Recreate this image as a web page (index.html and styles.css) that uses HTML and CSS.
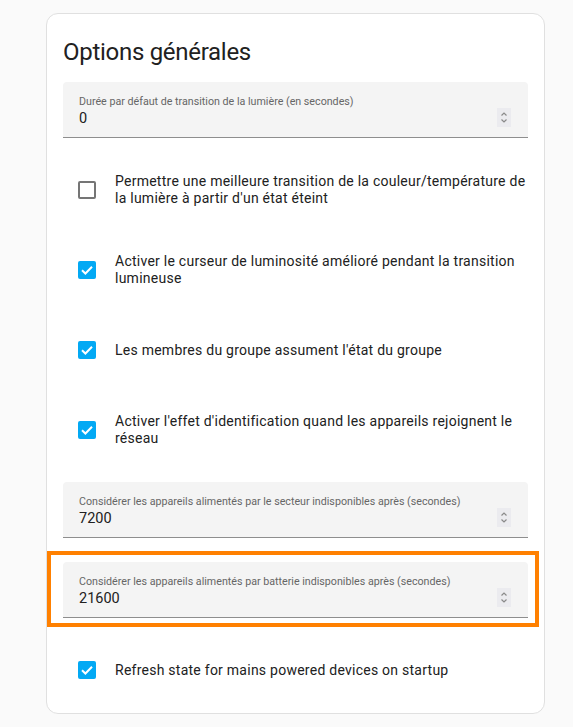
FILE: index.html
```html
<!DOCTYPE html>
<html lang="fr">
<head>
<meta charset="utf-8">
<link rel="stylesheet" href="styles.css">
</head>
<body>
<div class="card">
  <h1 class="title">Options générales</h1>

  <div class="field">
    <div class="field-text">
      <span class="label">Durée par défaut de transition de la lumière (en secondes)</span>
      <span class="value">0</span>
    </div>
    <svg class="spin" width="14" height="19" viewBox="0 0 14 19"><rect width="14" height="19" fill="#ebebef"/><path d="M4.5 7.5 L7 5 L9.5 7.5" fill="none" stroke="#8a8a8a" stroke-width="1.2"/><path d="M4.5 11.5 L7 14 L9.5 11.5" fill="none" stroke="#8a8a8a" stroke-width="1.2"/></svg>
  </div>

  <div class="rows first">
    <div class="row">
      <span class="cb"></span>
      <span class="row-text">Permettre une meilleure transition de la couleur/température de la lumière à partir d'un état éteint</span>
    </div>
    <div class="row">
      <span class="cb on"><svg width="18" height="18" viewBox="0 0 18 18"><path d="M4 9.2 L7.4 12.5 L14 5.8" fill="none" stroke="#fff" stroke-width="2"/></svg></span>
      <span class="row-text">Activer le curseur de luminosité amélioré pendant la transition lumineuse</span>
    </div>
    <div class="row">
      <span class="cb on"><svg width="18" height="18" viewBox="0 0 18 18"><path d="M4 9.2 L7.4 12.5 L14 5.8" fill="none" stroke="#fff" stroke-width="2"/></svg></span>
      <span class="row-text">Les membres du groupe assument l'état du groupe</span>
    </div>
    <div class="row">
      <span class="cb on"><svg width="18" height="18" viewBox="0 0 18 18"><path d="M4 9.2 L7.4 12.5 L14 5.8" fill="none" stroke="#fff" stroke-width="2"/></svg></span>
      <span class="row-text">Activer l'effet d'identification quand les appareils rejoignent le réseau</span>
    </div>
  </div>

  <div class="field gap-top">
    <div class="field-text">
      <span class="label">Considérer les appareils alimentés par le secteur indisponibles après (secondes)</span>
      <span class="value">7200</span>
    </div>
    <svg class="spin" width="14" height="19" viewBox="0 0 14 19"><rect width="14" height="19" fill="#ebebef"/><path d="M4.5 7.5 L7 5 L9.5 7.5" fill="none" stroke="#8a8a8a" stroke-width="1.2"/><path d="M4.5 11.5 L7 14 L9.5 11.5" fill="none" stroke="#8a8a8a" stroke-width="1.2"/></svg>
  </div>

  <div class="field highlighted">
    <div class="field-text">
      <span class="label">Considérer les appareils alimentés par batterie indisponibles après (secondes)</span>
      <span class="value">21600</span>
    </div>
    <svg class="spin" width="14" height="19" viewBox="0 0 14 19"><rect width="14" height="19" fill="#ebebef"/><path d="M4.5 7.5 L7 5 L9.5 7.5" fill="none" stroke="#8a8a8a" stroke-width="1.2"/><path d="M4.5 11.5 L7 14 L9.5 11.5" fill="none" stroke="#8a8a8a" stroke-width="1.2"/></svg>
    <span class="outline"></span>
  </div>

  <div class="rows">
    <div class="row">
      <span class="cb on"><svg width="18" height="18" viewBox="0 0 18 18"><path d="M4 9.2 L7.4 12.5 L14 5.8" fill="none" stroke="#fff" stroke-width="2"/></svg></span>
      <span class="row-text">Refresh state for mains powered devices on startup</span>
    </div>
  </div>
</div>
</body>
</html>
```

FILE: styles.css
```css
* { box-sizing: border-box; }
html, body {
  margin: 0;
  padding: 0;
  background: #fafafa;
  font-family: Roboto, "Noto Sans", sans-serif;
  color: #212121;
}
body {
  padding: 13px 0 0 46px;
}
.card {
  width: 499px;
  height: 701px;
  background: #fff;
  border: 1px solid #e0e0e0;
  border-radius: 12px;
  padding: 22px 16px 0 16px;
}
.title {
  margin: 0 0 14px 0;
  font-size: 24px;
  line-height: 32px;
  font-weight: 400;
  letter-spacing: -0.012em;
  color: #212121;
}
.field {
  position: relative;
  height: 56px;
  background: #f4f4f4;
  border-radius: 4px 4px 0 0;
  border-bottom: 1px solid #8e8e8e;
  display: flex;
  align-items: center;
  padding: 0 17px 0 16px;
}
.field-text {
  flex: 1;
  display: flex;
  flex-direction: column;
  padding-top: 4px;
}
.label {
  font-size: 10.7px;
  line-height: 14px;
  color: #666;
}
.value {
  font-size: 14.5px;
  line-height: 19px;
  color: #212121;
}
.spin {
  display: block;
  margin-top: 15px;
}
.gap-top { margin-top: 12px; }
.highlighted { margin-top: 24px; }
.outline {
  position: absolute;
  left: -16px;
  top: -11px;
  right: -11px;
  bottom: -10px;
  border: 4px solid #ff8000;
  pointer-events: none;
}
.rows {
  margin-top: 12px;
}
.row {
  height: 80px;
  display: flex;
  align-items: center;
  padding-left: 15px;
}
.cb {
  flex: none;
  width: 18px;
  height: 18px;
  border: 2px solid #757575;
  border-radius: 2px;
  margin-right: 19px;
}
.cb.on {
  border: none;
  background: #03a9f4;
}
.cb svg { display: block; }
.row-text {
  font-size: 14px;
  line-height: 17px;
  letter-spacing: 0.25px;
  color: #212121;
}
```
